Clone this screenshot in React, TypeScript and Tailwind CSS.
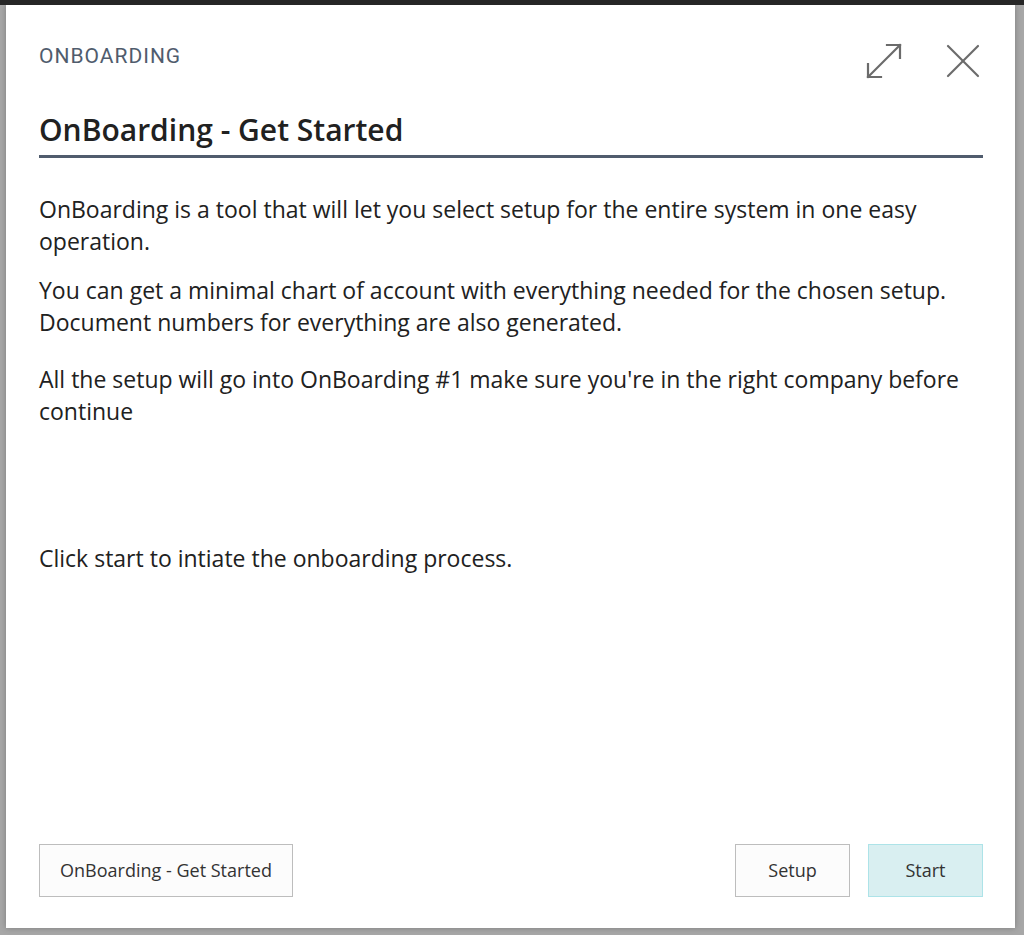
const BODY_FONT = "font-['Open_Sans','Noto_Sans',sans-serif]";

function ExpandIcon() {
  return (
    <svg width="38" height="38" viewBox="0 0 38 38" fill="none" stroke="#6b6b6b" strokeWidth="2.2" strokeLinecap="square">
      <path d="M3 35 L35 3" />
      <path d="M22 3 H35 V16" />
      <path d="M3 22 V35 H16" />
    </svg>
  );
}

function CloseIcon() {
  return (
    <svg width="34" height="34" viewBox="0 0 34 34" fill="none" stroke="#6b6b6b" strokeWidth="2.2" strokeLinecap="round">
      <path d="M2 2 L32 32" />
      <path d="M32 2 L2 32" />
    </svg>
  );
}

export default function App() {
  return (
    <div className="h-[935px] w-[1024px] overflow-hidden bg-[#a7a7a7] border-t-[5px] border-[#262626] pl-[6px] pr-[9px] pb-[7px] flex">
      <div className={`flex-1 flex flex-col bg-white shadow-[0_0_6px_rgba(0,0,0,0.25)] pl-[33px] pr-[32px] pt-[37px] pb-[31px] ${BODY_FONT}`}>
        {/* Caption row */}
        <div className="h-[28px] flex items-center justify-between">
          <p className="font-['Roboto',sans-serif] text-[21px] font-normal tracking-[1px] text-[#505c6d] leading-[28px]">
            ONBOARDING
          </p>
          <div className="flex items-center gap-[43px] mt-[10px] mr-[3px]">
            <button aria-label="Expand"><ExpandIcon /></button>
            <button aria-label="Close"><CloseIcon /></button>
          </div>
        </div>

        {/* Title */}
        <h1 className="mt-[40px] text-[30px] font-semibold leading-[40px] text-[#212121] pb-[5px] border-b-[3px] border-[#505c6d]">
          OnBoarding - Get Started
        </h1>

        {/* Body */}
        <div className="mt-[35px] text-[23px] leading-[32px] text-[#212121]">
          <p>OnBoarding is a tool that will let you select setup for the entire system in one easy operation.</p>
          <p className="mt-[17px]">
            You can get a minimal chart of account with everything needed for the chosen setup. Document numbers for everything are also generated.
          </p>
          <p className="mt-[25px]">
            All the setup will go into OnBoarding #1 make sure you're in the right company before continue
          </p>
          <p className="mt-[115px]">Click start to intiate the onboarding process.</p>
        </div>

        {/* Footer buttons */}
        <div className="mt-auto flex items-center justify-between">
          <button className="h-[53px] w-[254px] border border-[#bdbdbd] bg-[#fcfcfc] text-[18px] text-[#333]">
            OnBoarding - Get Started
          </button>
          <div className="flex gap-[18px]">
            <button className="h-[53px] w-[115px] border border-[#bdbdbd] bg-[#fcfcfc] text-[18px] text-[#333]">
              Setup
            </button>
            <button className="h-[53px] w-[115px] border border-[#ade3e8] bg-[#d9eff1] text-[18px] text-[#333]">
              Start
            </button>
          </div>
        </div>
      </div>
    </div>
  );
}
